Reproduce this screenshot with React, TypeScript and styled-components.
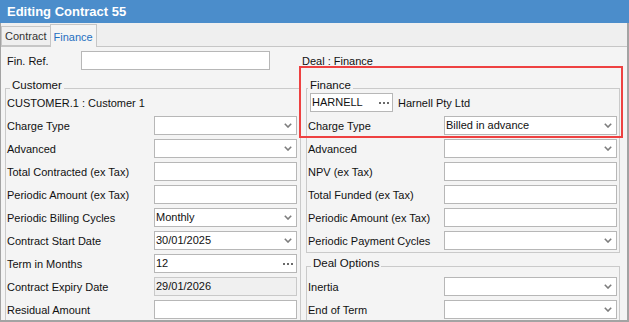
import React from 'react';
import styled, { createGlobalStyle } from 'styled-components';

const GlobalStyle = createGlobalStyle`
  html, body { margin: 0; padding: 0; background: #ffffff; }
  body {
    font-family: "Liberation Sans", Arial, sans-serif;
    font-size: 11px;
    color: #111111;
  }
  * { box-sizing: border-box; }
`;

const Window = styled.div`
  width: 629px;
  height: 322px;
  display: flex;
  flex-direction: column;
  overflow: hidden;
  background: #f4f4f4;
`;

const TitleBar = styled.div`
  flex: 0 0 22px;
  background: #4b8dcb;
  color: #ffffff;
  font-weight: bold;
  font-size: 13px;
  line-height: 23px;
  padding-left: 7px;
`;

const Frame = styled.div`
  flex: 1;
  min-height: 0;
  display: flex;
  flex-direction: column;
  border-left: 1px solid #a3a3a3;
  border-right: 2px solid #a3a3a3;
  border-bottom: 2px solid #a3a3a3;
`;

const TabStrip = styled.div`
  flex: 0 0 24px;
  display: flex;
  align-items: flex-end;
  background: #efefef;
  border-bottom: 1px solid #c6c6c6;
`;

const Tab = styled.div<{ $active?: boolean }>`
  height: ${(p) => (p.$active ? 23 : 20)}px;
  margin-bottom: ${(p) => (p.$active ? -1 : 0)}px;
  margin-left: ${(p) => (p.$active ? -1 : 0)}px;
  padding: 0 3px;
  border: 1px solid #c6c6c6;
  border-bottom: ${(p) => (p.$active ? 'none' : '1px solid #c6c6c6')};
  background: ${(p) => (p.$active ? '#f4f4f4' : '#efefef')};
  color: ${(p) => (p.$active ? '#1f6fc1' : '#333333')};
  line-height: ${(p) => (p.$active ? 25 : 18)}px;
  white-space: nowrap;
`;

const Content = styled.div`
  position: relative;
  flex: 1;
  min-height: 0;
  overflow: hidden;
  padding: 4px 7px 0 4px;
`;

const TopRow = styled.div`
  display: flex;
  align-items: center;
  height: 19px;
`;

const RefField = styled.div`
  flex: 0 0 297px;
  display: flex;
  align-items: center;
  padding-left: 2px;
`;

const RefLabel = styled.span`
  width: 74px;
`;

const DealCaption = styled.span`
  padding-left: 0px;
`;

const Columns = styled.div`
  display: flex;
  align-items: flex-start;
  gap: 5px;
  margin-top: 18px;
`;

const RightColumn = styled.div`
  display: flex;
  flex-direction: column;
  gap: 13px;
`;

const GroupBox = styled.div<{ $w: number; $pt: number; $pr: number; $pb: number }>`
  position: relative;
  width: ${(p) => p.$w}px;
  border: 1px solid #cacaca;
  padding: ${(p) => `${p.$pt}px ${p.$pr}px ${p.$pb}px 1px`};
  display: flex;
  flex-direction: column;
  gap: 4px;
`;

const Legend = styled.span<{ $x: number }>`
  position: absolute;
  top: -10px;
  left: ${(p) => p.$x}px;
  padding: 0 2px;
  background: #f4f4f4;
  line-height: 13px;
  font-size: 11.5px;
`;

const Row = styled.div<{ $label: number; $input: number }>`
  display: grid;
  grid-template-columns: ${(p) => `${p.$label}px ${p.$input}px`};
  align-items: center;
  height: 19px;
`;

const PlainRow = styled.div`
  display: flex;
  align-items: center;
  height: 19px;
`;

const Box = styled.div<{ $w?: number; $disabled?: boolean; $pr?: number }>`
  ${(p) => (p.$w ? `width: ${p.$w}px;` : '')}
  height: 19px;
  border: 1px solid ${(p) => (p.$disabled ? '#c9c9c9' : '#b7b7b7')};
  background: ${(p) => (p.$disabled ? '#f0f0f0' : '#ffffff')};
  display: flex;
  align-items: center;
  padding: 0 ${(p) => p.$pr ?? 4}px 0 1px;
  white-space: nowrap;
  overflow: hidden;
`;

const Value = styled.span`
  flex: 1;
  line-height: 17px;
`;

const Dots = styled.span`
  display: flex;
  gap: 2px;
  & > i {
    width: 2px;
    height: 2px;
    background: #6a6a6a;
  }
`;

const LookupBox = styled(Box)`
  margin-left: 2px;
`;

const LookupName = styled.span`
  margin-left: 5px;
`;

const Highlight = styled.div`
  position: absolute;
  left: 298px;
  top: 19px;
  width: 324px;
  height: 72px;
  border: 2px solid #ee4141;
  pointer-events: none;
`;

const Chevron = () => (
  <svg width="8" height="5" viewBox="0 0 8 5">
    <polyline points="0.8,0.8 4,4 7.2,0.8" fill="none" stroke="#7d7d7d" strokeWidth="1.6" />
  </svg>
);

const Ellipsis = () => (
  <Dots>
    <i />
    <i />
    <i />
  </Dots>
);

type Kind = 'text' | 'combo' | 'lookup' | 'disabled';

const Control = ({ kind, value }: { kind: Kind; value?: string }) => (
  <Box $disabled={kind === 'disabled'} $pr={kind === 'lookup' ? 3 : 4}>
    <Value>{value}</Value>
    {kind === 'combo' && <Chevron />}
    {kind === 'lookup' && <Ellipsis />}
  </Box>
);

type Field = { label: string; kind: Kind; value?: string };

const customerFields: Field[] = [
  { label: 'Charge Type', kind: 'combo' },
  { label: 'Advanced', kind: 'combo' },
  { label: 'Total Contracted (ex Tax)', kind: 'text' },
  { label: 'Periodic Amount (ex Tax)', kind: 'text' },
  { label: 'Periodic Billing Cycles', kind: 'combo', value: 'Monthly' },
  { label: 'Contract Start Date', kind: 'combo', value: '30/01/2025' },
  { label: 'Term in Months', kind: 'lookup', value: '12' },
  { label: 'Contract Expiry Date', kind: 'disabled', value: '29/01/2026' },
  { label: 'Residual Amount', kind: 'text' },
];

const financeFields: Field[] = [
  { label: 'Charge Type', kind: 'combo', value: 'Billed in advance' },
  { label: 'Advanced', kind: 'combo' },
  { label: 'NPV (ex Tax)', kind: 'text' },
  { label: 'Total Funded (ex Tax)', kind: 'text' },
  { label: 'Periodic Amount (ex Tax)', kind: 'text' },
  { label: 'Periodic Payment Cycles', kind: 'combo' },
];

const dealFields: Field[] = [
  { label: 'Inertia', kind: 'combo' },
  { label: 'End of Term', kind: 'combo' },
];

const FieldRows = ({ fields, label, input }: { fields: Field[]; label: number; input: number }) => (
  <>
    {fields.map((f) => (
      <Row key={f.label} $label={label} $input={input}>
        <span>{f.label}</span>
        <Control kind={f.kind} value={f.value} />
      </Row>
    ))}
  </>
);

export default function App() {
  return (
    <>
      <GlobalStyle />
      <Window>
        <TitleBar>Editing Contract 55</TitleBar>
        <Frame>
          <TabStrip>
            <Tab>Contract</Tab>
            <Tab $active>Finance</Tab>
          </TabStrip>
          <Content>
            <TopRow>
              <RefField>
                <RefLabel>Fin. Ref.</RefLabel>
                <Box $w={189} />
              </RefField>
              <DealCaption>Deal : Finance</DealCaption>
            </TopRow>
            <Columns>
              <GroupBox $w={296} $pt={4} $pr={3} $pb={20}>
                <Legend $x={4}>Customer</Legend>
                <PlainRow>CUSTOMER.1 : Customer 1</PlainRow>
                <FieldRows fields={customerFields} label={147} input={143} />
              </GroupBox>
              <RightColumn>
                <GroupBox $w={314} $pt={4} $pr={2} $pb={2}>
                  <Legend $x={1}>Finance</Legend>
                  <PlainRow>
                    <LookupBox $w={83} $pr={3}>
                      <Value>HARNELL</Value>
                      <Ellipsis />
                    </LookupBox>
                    <LookupName>Harnell Pty Ltd</LookupName>
                  </PlainRow>
                  <FieldRows fields={financeFields} label={136} input={173} />
                </GroupBox>
                <GroupBox $w={314} $pt={10} $pr={2} $pb={20}>
                  <Legend $x={4}>Deal Options</Legend>
                  <FieldRows fields={dealFields} label={136} input={173} />
                </GroupBox>
              </RightColumn>
            </Columns>
            <Highlight />
          </Content>
        </Frame>
      </Window>
    </>
  );
}
